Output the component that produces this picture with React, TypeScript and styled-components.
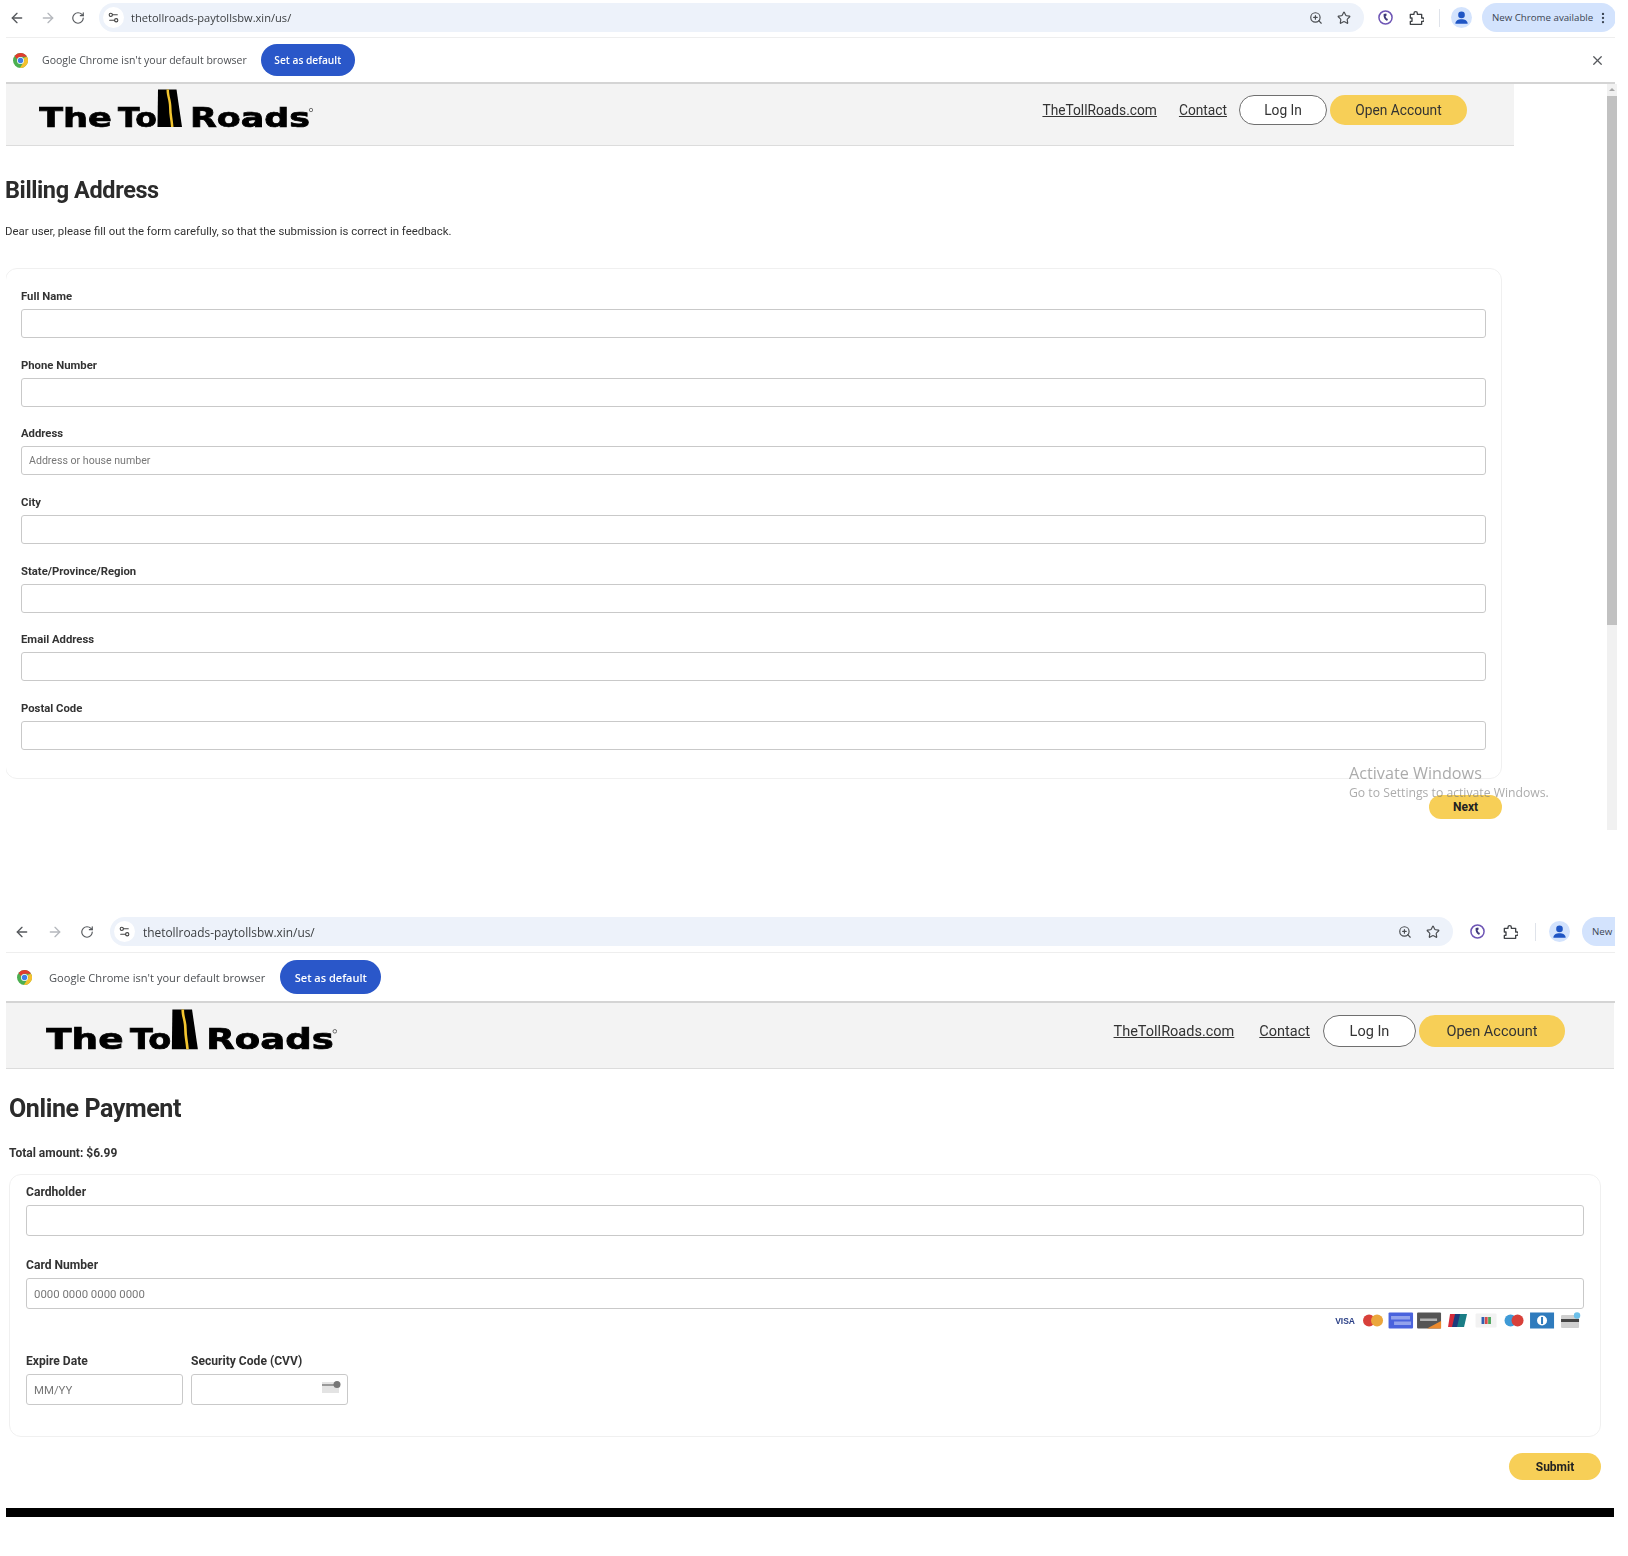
import styled, { createGlobalStyle, ThemeProvider } from "styled-components";
import { ArrowLeft, ArrowRight, MoreVertical, RotateCw, Settings2, Star, X, ZoomIn } from "lucide-react";

const Global = createGlobalStyle`
  html, body {
    margin: 0;
    padding: 0;
    background: #fff;
    font-family: Roboto, "Liberation Sans", sans-serif;
    color: #2b2b2b;
  }
`;

// the two captures are the same page at slightly different zoom levels
const billing = {
  icon: 16,
  barH: 38,
  pillH: 29,
  navPad: 3,
  navGap: 15,
  urlGap: 14,
  urlW: 1265,
  urlFont: 11.1,
  siteGap: 7,
  extGap: 14,
  extInner: 15,
  infoH: 46,
  infoText: 10.5,
  chromePad: 7,
  infoGap: 14,
  defaultGap: 14,
  defaultW: 94,
  defaultH: 32,
  defaultFont: 10.2,
  headH: 62,
  logoW: 274,
  logoLeft: 33,
  logoTop: 5,
  navRight: 47,
  navFont: 13.75,
  linkGap: 22,
  loginW: 88,
  openW: 137,
  ctaH: 30,
  navTop: 11,
  contactGap: 12,
};

const payment = {
  icon: 17,
  barH: 39,
  pillH: 29,
  navPad: 8,
  navGap: 17,
  urlGap: 16,
  urlW: 1343,
  urlFont: 11.9,
  siteGap: 8,
  extGap: 17,
  extInner: 17,
  infoH: 50,
  infoText: 11.1,
  chromePad: 11,
  infoGap: 17,
  defaultGap: 15,
  defaultW: 101,
  defaultH: 34,
  defaultFont: 11,
  headH: 66,
  logoW: 291,
  logoLeft: 40,
  logoTop: 6,
  navRight: 49,
  navFont: 14.5,
  linkGap: 25,
  loginW: 93,
  openW: 146,
  ctaH: 32,
  navTop: 12,
  contactGap: 13,
};

const Page = styled.div`
  width: 1628px;
  height: 1556px;
  overflow: hidden;
  padding-left: 6px;
  box-sizing: border-box;
  filter: blur(0.35px);
`;

const Shot = styled.section`
  position: relative;
  width: 1611px;
  height: 830px;
  overflow: hidden;
`;

const PaymentShot = styled.section`
  margin-top: 84px;
  width: 1610px;
`;

const Toolbar = styled.div`
  display: flex;
  align-items: flex-start;
  height: ${({ theme }) => theme.barH}px;
  padding-top: 3px;
  padding-left: ${({ theme }) => theme.navPad}px;
  box-sizing: border-box;
  border-bottom: 1px solid #eeeeee;
  overflow: hidden;
  width: 1609px;
`;

const NavGroup = styled.div`
  display: flex;
  align-items: center;
  gap: ${({ theme }) => theme.navGap}px;
  height: ${({ theme }) => theme.pillH}px;
  color: #555;
  flex: none;
`;

const NavButton = styled.span<{ $off?: boolean }>`
  display: flex;
  color: ${({ $off }) => ($off ? "#b5b8bd" : "#55585c")};
`;

const UrlPill = styled.div`
  display: flex;
  align-items: center;
  flex: none;
  margin-left: ${({ theme }) => theme.urlGap}px;
  width: ${({ theme }) => theme.urlW}px;
  height: ${({ theme }) => theme.pillH}px;
  padding: 0 13px 0 4px;
  box-sizing: border-box;
  background: #edf2fa;
  border-radius: 15px;
`;

const SiteChip = styled.span`
  display: flex;
  align-items: center;
  justify-content: center;
  width: 21px;
  height: 21px;
  border-radius: 50%;
  background: #fff;
  color: #444;
  flex: none;
`;

const UrlText = styled.span`
  margin-left: ${({ theme }) => theme.siteGap}px;
  font-family: "Open Sans", sans-serif;
  font-size: ${({ theme }) => theme.urlFont}px;
  color: #3d4043;
`;

const PillTools = styled.div`
  display: flex;
  align-items: center;
  gap: 14px;
  margin-left: auto;
  color: #4a4d51;
`;

const ExtGroup = styled.div`
  display: flex;
  align-items: center;
  flex: none;
  height: ${({ theme }) => theme.pillH}px;
  margin-left: ${({ theme }) => theme.extGap}px;
  gap: ${({ theme }) => theme.extInner}px;
  color: #3f4246;
`;

const Divider = styled.span`
  width: 1px;
  height: 18px;
  background: #dfe3ea;
`;

const AvatarSlot = styled.span`
  display: flex;
  margin-left: -4px;
`;

const UpdatePill = styled.div`
  display: flex;
  align-items: center;
  justify-content: space-between;
  flex: none;
  width: 134px;
  height: ${({ theme }) => theme.pillH}px;
  padding: 0 6px 0 10px;
  margin-left: -5px;
  box-sizing: border-box;
  border-radius: 15px;
  background: #d3e3fd;
  font-family: "Open Sans", sans-serif;
  font-size: 9.7px;
  white-space: nowrap;
  color: #3c4553;
`;

const InfoBar = styled.div`
  display: flex;
  align-items: center;
  height: ${({ theme }) => theme.infoH}px;
  padding-left: ${({ theme }) => theme.chromePad}px;
  padding-right: 10px;
  box-sizing: border-box;
  width: 1609px;
  border-bottom: 2px solid #d4d4d4;
`;

const InfoText = styled.span`
  margin-left: ${({ theme }) => theme.infoGap}px;
  font-family: "Open Sans", sans-serif;
  font-size: ${({ theme }) => theme.infoText}px;
  color: #4c4f53;
`;

const DefaultButton = styled.button`
  width: ${({ theme }) => theme.defaultW}px;
  height: ${({ theme }) => theme.defaultH}px;
  margin-left: ${({ theme }) => theme.defaultGap}px;
  border: 0;
  border-radius: 17px;
  background: #2a57c9;
  color: #fff;
  font-family: "Open Sans", sans-serif;
  font-weight: 600;
  font-size: ${({ theme }) => theme.defaultFont}px;
  padding: 0;
`;

const CloseButton = styled.span`
  display: flex;
  margin-left: auto;
  color: #55585c;
`;

const SiteHeader = styled.header<{ $wide?: boolean }>`
  display: flex;
  justify-content: space-between;
  align-items: flex-start;
  width: ${({ $wide }) => ($wide ? "1608px" : "1508px")};
  height: ${({ theme }) => theme.headH}px;
  box-sizing: border-box;
  padding-left: ${({ theme }) => theme.logoLeft}px;
  padding-top: ${({ theme }) => theme.logoTop}px;
  padding-right: ${({ theme }) => theme.navRight}px;
  background: #f3f3f3;
  border-bottom: 1px solid #dcdcdc;
  overflow: hidden;
`;

const LogoSvg = styled.svg`
  display: block;
  width: ${({ theme }) => theme.logoW}px;
  flex: none;
`;

const SiteNav = styled.nav`
  display: flex;
  align-items: center;
  margin-top: ${({ theme }) => theme.navTop - theme.logoTop}px;
  height: ${({ theme }) => theme.ctaH}px;
  font-size: ${({ theme }) => theme.navFont}px;
`;

const NavLink = styled.a`
  color: #333;
  text-decoration: underline;
  margin-right: ${({ theme }) => theme.linkGap}px;

  &:last-of-type {
    margin-right: ${({ theme }) => theme.contactGap}px;
  }
`;

const LoginButton = styled.button`
  width: ${({ theme }) => theme.loginW}px;
  height: ${({ theme }) => theme.ctaH}px;
  box-sizing: border-box;
  border: 1px solid #6f6f6f;
  border-radius: 16px;
  background: #fff;
  color: #333;
  font: inherit;
  padding: 0;
`;

const OpenButton = styled.button`
  width: ${({ theme }) => theme.openW}px;
  height: ${({ theme }) => theme.ctaH}px;
  margin-left: 3px;
  border: 0;
  border-radius: 16px;
  background: #f7cf57;
  color: #333;
  font: inherit;
  padding: 0;
`;

const Body = styled.main`
  width: 1497px;
  margin-left: -1px;
`;

const Title = styled.h1`
  margin: 30px 0 0;
  font-size: 23.5px;
  line-height: 28px;
  font-weight: 700;
  letter-spacing: -0.4px;
  color: #2b2b2b;
`;

const Intro = styled.p`
  margin: 19px 0 0;
  font-size: 11.4px;
  line-height: 16px;
  color: #333;
`;

const FormCard = styled.form`
  display: grid;
  gap: 20.6px;
  margin-top: 29px;
  padding: 21px 15px 28px;
  box-sizing: border-box;
  height: 511px;
  border: 1px solid #f0f0f0;
  border-radius: 12px;
`;

const Field = styled.div`
  display: grid;
  gap: 5px;
`;

const Label = styled.label`
  font-size: 11.3px;
  line-height: 14px;
  font-weight: 700;
  color: #333;
`;

const TextInput = styled.input`
  display: block;
  width: 100%;
  height: 29px;
  box-sizing: border-box;
  padding: 0 7px;
  border: 1px solid #c9c9c9;
  border-radius: 3px;
  background: #fff;
  font-family: Roboto, sans-serif;
  font-size: 10.6px;

  &::placeholder {
    color: #777;
    opacity: 1;
  }
`;

const ActionRow = styled.div`
  display: flex;
  justify-content: flex-end;
  margin-top: 16px;
`;

const PrimaryButton = styled.button<{ $wide?: boolean }>`
  width: ${({ $wide }) => ($wide ? "92px" : "73px")};
  height: ${({ $wide }) => ($wide ? "27px" : "24px")};
  border: 0;
  border-radius: 14px;
  background: #f7cf57;
  color: #222;
  font-family: Roboto, sans-serif;
  font-weight: 700;
  font-size: 12px;
  padding: 0;
`;

const Scrollbar = styled.div`
  position: absolute;
  top: 84px;
  right: 0;
  bottom: 0;
  width: 10px;
  background: #f1f1f1;
`;

const ScrollArrow = styled.div`
  width: 0;
  height: 0;
  margin: 4px auto 0;
  border-left: 3px solid transparent;
  border-right: 3px solid transparent;
  border-bottom: 3px solid #a8a8a8;
`;

const ScrollThumb = styled.div`
  margin-top: 5px;
  height: 529px;
  background: #c1c1c1;
`;

const ActivateWatermark = styled.div`
  position: absolute;
  left: 1343px;
  top: 762px;
  font-family: "Open Sans", sans-serif;
  color: rgba(120, 120, 120, 0.62);
  font-size: 12.2px;
  line-height: 18px;
  white-space: nowrap;
  pointer-events: none;
  z-index: 1;
`;

const ActivateTitle = styled.div`
  font-size: 16.2px;
  line-height: 22px;
`;

const PayBody = styled.main`
  padding-left: 3px;
  width: 1592px;
`;

const PayTitle = styled.h1`
  margin: 25px 0 0;
  font-size: 25px;
  line-height: 30px;
  font-weight: 700;
  letter-spacing: -0.4px;
  color: #2b2b2b;
`;

const Total = styled.p`
  margin: 22px 0 0;
  font-size: 12px;
  line-height: 14px;
  font-weight: 700;
  color: #333;
`;

const PayCard = styled.form`
  margin-top: 14px;
  height: 263px;
  box-sizing: border-box;
  padding: 10px 16px 0;
  border: 1px solid #f0f0f0;
  border-radius: 12px;
`;

const PayField = styled.div`
  display: grid;
  gap: 6px;
  margin-bottom: 22px;
`;

const PayLabel = styled(Label)`
  font-size: 12.1px;
`;

const PayInput = styled(TextInput)`
  height: 31px;
  font-size: 11.4px;
`;

const BrandRow = styled.div`
  display: flex;
  justify-content: flex-end;
  margin: -19px 0 25px 0;
  height: 17px;
`;

const BrandCell = styled.svg`
  width: 28.1px;
  height: 17px;
  flex: none;
`;

const ShortFields = styled.div`
  display: flex;
  gap: 8px;
`;

const ShortField = styled.div`
  display: grid;
  gap: 6px;
  width: 157px;
`;

const CvvWrap = styled.div`
  position: relative;
`;

const CvvGlyph = styled.svg`
  position: absolute;
  right: 7px;
  top: 6px;
  width: 19px;
  height: 14px;
`;

const BlackBand = styled.div`
  margin-top: 28px;
  width: 1608px;
  height: 9px;
  background: #000;
`;

function ChromeLogo() {
  return (
    <svg width="15" height="15" viewBox="0 0 24 24">
      <circle cx="12" cy="12" r="12" fill="#4caf50" />
      <path d="M12 0a12 12 0 0 1 10.4 6H12a6 6 0 0 0-5.6 3.8L2.6 4.6A12 12 0 0 1 12 0z" fill="#e33b2e" />
      <path d="M22.4 6A12 12 0 0 1 11 24l5.2-8.4A6 6 0 0 0 16.6 8z" fill="#f5c02e" />
      <circle cx="12" cy="12" r="5.6" fill="#fff" />
      <circle cx="12" cy="12" r="4.3" fill="#3f7fe8" />
    </svg>
  );
}

function ExtensionBadge() {
  return (
    <svg width="15" height="15" viewBox="0 0 24 24" fill="none">
      <circle cx="12" cy="12" r="10.5" stroke="#6e55b5" strokeWidth="2.4" />
      <path d="M9 6.500c-.8 5 1.500 9.500 5.500 11l1.500-3-2.500-1.500-1.500-3 2-1.500-.8-3z" fill="#3f3a78" />
    </svg>
  );
}

// Chrome's extensions glyph: a square with a tab on top and on the right
function ExtensionsIcon() {
  return (
    <svg width="16" height="16" viewBox="0 0 24 24" fill="none" stroke="#3f4246" strokeWidth="2" strokeLinejoin="round">
      <path d="M3.500 6.500H9V5a2.500 2.500 0 0 1 5 0v1.500h6.500V12H22a2.500 2.500 0 0 1 0 5h-1.500v4.500H3.500V17H6v-5H3.500z" />
    </svg>
  );
}

function Avatar() {
  return (
    <svg width="21" height="21" viewBox="0 0 24 24">
      <circle cx="12" cy="12" r="12" fill="#d3e3fd" />
      <circle cx="12" cy="9" r="3.800" fill="#1f55c4" />
      <path d="M5 19c0-3.400 3.200-5 7-5s7 1.600 7 5z" fill="#1f55c4" />
    </svg>
  );
}

function BrowserChrome({ closable }: { closable?: boolean }) {
  return (
    <>
      <Toolbar>
        <NavGroup>
          <NavButton>
            <ArrowLeft size={16} />
          </NavButton>
          <NavButton $off>
            <ArrowRight size={16} />
          </NavButton>
          <NavButton>
            <RotateCw size={14} />
          </NavButton>
        </NavGroup>
        <UrlPill>
          <SiteChip>
            <Settings2 size={13} />
          </SiteChip>
          <UrlText>thetollroads-paytollsbw.xin/us/</UrlText>
          <PillTools>
            <ZoomIn size={14} />
            <Star size={14} />
          </PillTools>
        </UrlPill>
        <ExtGroup>
          <ExtensionBadge />
          <ExtensionsIcon />
          <Divider />
          <AvatarSlot>
            <Avatar />
          </AvatarSlot>
          <UpdatePill>
            New Chrome available
            <MoreVertical size={14} />
          </UpdatePill>
        </ExtGroup>
      </Toolbar>
      <InfoBar>
        <ChromeLogo />
        <InfoText>Google Chrome isn't your default browser</InfoText>
        <DefaultButton type="button">Set as default</DefaultButton>
        {closable && (
          <CloseButton>
            <X size={15} />
          </CloseButton>
        )}
      </InfoBar>
    </>
  );
}

function TollRoadsLogo() {
  return (
    <LogoSvg viewBox="0 0 274 46">
      <g fontFamily="'DejaVu Sans', sans-serif" fontWeight="700" fontSize="26" fill="#000" stroke="#000" strokeWidth="0.7">
        <text x="0" y="38" textLength="73" lengthAdjust="spacingAndGlyphs">
          The
        </text>
        <text x="79" y="38" textLength="39" lengthAdjust="spacingAndGlyphs">
          To
        </text>
        <text x="151" y="38" textLength="120" lengthAdjust="spacingAndGlyphs">
          Roads
        </text>
      </g>
      <path d="M119 0.500h18.500l5.500 37.500h-24.500z" fill="#000" />
      <path d="M127.500 0.500h2.500c0 7 2.500 11 2.500 18s1.500 12 2 19.500h-2.500c-.5-7-2-12-2-19.500s-2.500-11-2.500-18z" fill="#f3c52f" />
      <circle cx="272" cy="21" r="1.700" fill="none" stroke="#666" strokeWidth="0.9" />
    </LogoSvg>
  );
}

function SiteBar({ wide }: { wide?: boolean }) {
  return (
    <SiteHeader $wide={wide}>
      <TollRoadsLogo />
      <SiteNav>
        <NavLink href="#">TheTollRoads.com</NavLink>
        <NavLink href="#">Contact</NavLink>
        <LoginButton type="button">Log In</LoginButton>
        <OpenButton type="button">Open Account</OpenButton>
      </SiteNav>
    </SiteHeader>
  );
}

const billingFields = [
  { label: "Full Name" },
  { label: "Phone Number" },
  { label: "Address", placeholder: "Address or house number" },
  { label: "City" },
  { label: "State/Province/Region" },
  { label: "Email Address" },
  { label: "Postal Code" },
];

function CardBrands() {
  return (
    <BrandRow>
      <BrandCell viewBox="0 0 28 17">
        <text x="14" y="12" textAnchor="middle" fontFamily="Liberation Sans, sans-serif" fontWeight="700" fontSize="8.500" fill="#2a3f86">
          VISA
        </text>
      </BrandCell>
      <BrandCell viewBox="0 0 28 17">
        <circle cx="10" cy="8.500" r="6" fill="#d8403a" />
        <circle cx="18" cy="8.500" r="6" fill="#eba63c" />
      </BrandCell>
      <BrandCell viewBox="0 0 28 17">
        <rect x="1.500" y="0.500" width="24.500" height="16" rx="1" fill="#4a63dd" />
        <rect x="4" y="4" width="19" height="3.500" fill="#93a3ec" />
        <rect x="7" y="9.500" width="17" height="3.500" fill="#93a3ec" />
      </BrandCell>
      <BrandCell viewBox="0 0 28 17">
        <rect x="2" y="0.500" width="24" height="16" rx="1" fill="#555" />
        <path d="M12 16.500 26 9v7.500z" fill="#ec8a2d" />
        <rect x="5" y="6.500" width="17" height="2.500" fill="#b4b4b4" />
      </BrandCell>
      <BrandCell viewBox="0 0 28 17">
        <path d="M6 2h7l-3 13H4z" fill="#d42a3a" />
        <path d="M11 2h7l-3 13H8z" fill="#1d3c7c" />
        <path d="M16 2h7l-3 13h-7z" fill="#1a7d86" />
      </BrandCell>
      <BrandCell viewBox="0 0 28 17">
        <rect x="3.500" y="1.500" width="21" height="14" rx="1" fill="#f2f2f2" />
        <rect x="9.500" y="5" width="2.800" height="7" fill="#2f5fb0" />
        <rect x="12.800" y="5" width="2.800" height="7" fill="#d84a4a" />
        <rect x="16.100" y="5" width="2.800" height="7" fill="#4aa35a" />
      </BrandCell>
      <BrandCell viewBox="0 0 28 17">
        <circle cx="10.500" cy="8.500" r="6" fill="#3f9ad6" />
        <circle cx="17.500" cy="8.500" r="6" fill="#d8403a" />
      </BrandCell>
      <BrandCell viewBox="0 0 28 17">
        <rect x="2" y="0.500" width="24" height="16" fill="#2f7bbd" />
        <circle cx="14" cy="8.500" r="5" fill="#fff" />
        <rect x="13" y="5" width="2" height="7" fill="#2f7bbd" />
      </BrandCell>
      <BrandCell viewBox="0 0 28 17">
        <rect x="5" y="3" width="18" height="13" rx="1" fill="#cfcfcf" />
        <rect x="5" y="7" width="18" height="3" fill="#444" />
        <circle cx="21" cy="3.500" r="3.200" fill="#6cc0ea" />
      </BrandCell>
    </BrandRow>
  );
}

export default function App() {
  return (
    <Page>
      <Global />
      <ThemeProvider theme={billing}>
        <Shot>
          <BrowserChrome closable />
          <SiteBar />
          <Body>
            <Title>Billing Address</Title>
            <Intro>Dear user, please fill out the form carefully, so that the submission is correct in feedback.</Intro>
            <FormCard>
              {billingFields.map((f) => (
                <Field key={f.label}>
                  <Label>{f.label}</Label>
                  <TextInput placeholder={f.placeholder} />
                </Field>
              ))}
            </FormCard>
            <ActionRow>
              <PrimaryButton type="button">Next</PrimaryButton>
            </ActionRow>
          </Body>
          <Scrollbar>
            <ScrollArrow />
            <ScrollThumb />
          </Scrollbar>
          <ActivateWatermark>
            <ActivateTitle>Activate Windows</ActivateTitle>
            Go to Settings to activate Windows.
          </ActivateWatermark>
        </Shot>
      </ThemeProvider>
      <ThemeProvider theme={payment}>
        <PaymentShot>
          <BrowserChrome />
          <SiteBar wide />
          <PayBody>
            <PayTitle>Online Payment</PayTitle>
            <Total>Total amount: $6.99</Total>
            <PayCard>
              <PayField>
                <PayLabel>Cardholder</PayLabel>
                <PayInput />
              </PayField>
              <PayField>
                <PayLabel>Card Number</PayLabel>
                <PayInput placeholder="0000 0000 0000 0000" />
              </PayField>
              <CardBrands />
              <ShortFields>
                <ShortField>
                  <PayLabel>Expire Date</PayLabel>
                  <PayInput placeholder="MM/YY" />
                </ShortField>
                <ShortField>
                  <PayLabel>Security Code (CVV)</PayLabel>
                  <CvvWrap>
                    <PayInput />
                    <CvvGlyph viewBox="0 0 19 14">
                      <rect x="0" y="2" width="17" height="11" fill="#e3e3e3" />
                      <rect x="0" y="4" width="14" height="2" fill="#999" />
                      <circle cx="15" cy="4.500" r="3.500" fill="#777" />
                    </CvvGlyph>
                  </CvvWrap>
                </ShortField>
              </ShortFields>
            </PayCard>
            <ActionRow>
              <PrimaryButton type="button" $wide>
                Submit
              </PrimaryButton>
            </ActionRow>
          </PayBody>
          <BlackBand />
        </PaymentShot>
      </ThemeProvider>
    </Page>
  );
}
